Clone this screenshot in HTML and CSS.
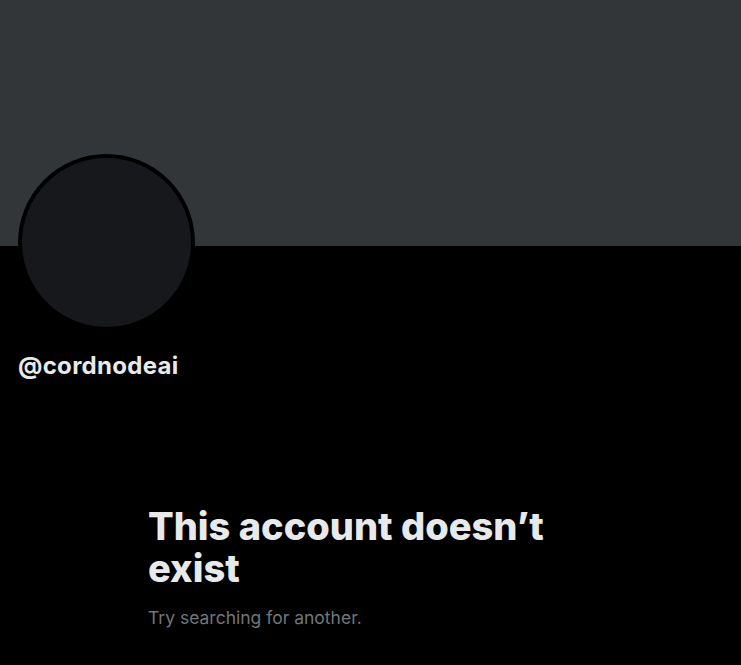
FILE: index.html
```html
<!DOCTYPE html>
<html>
<head>
<meta charset="utf-8">
<link rel="stylesheet" href="styles.css">
</head>
<body>
<div class="banner"></div>
<div class="profile">
  <div class="avatar"></div>
  <div class="handle">@cordnodeai</div>
</div>
<div class="empty">
  <h1 class="title">This account doesn’t exist</h1>
  <p class="sub">Try searching for another.</p>
</div>
</body>
</html>
```
FILE: styles.css
```css
html, body {
  margin: 0;
  padding: 0;
  background: #000;
}
body {
  font-family: Inter, "Open Sans", "Liberation Sans", sans-serif;
  color: #e7e9ea;
  width: 741px;
  height: 665px;
  overflow: hidden;
}
.banner {
  height: 246px;
  background: #333639;
}
.profile {
  padding: 0 18px;
}
.avatar {
  width: 169px;
  height: 169px;
  border: 4px solid #000;
  border-radius: 50%;
  background: #16181c;
  margin-top: -92px;
}
.handle {
  margin-top: 21px;
  font-size: 24px;
  font-weight: 700;
  line-height: 28px;
  letter-spacing: 0.3px;
}
.empty {
  margin: 125px 0 0 148px;
  width: 410px;
}
.title {
  margin: 0;
  font-size: 38px;
  line-height: 42px;
  font-weight: 800;
  letter-spacing: 0;
}
.sub {
  margin: 17px 0 0;
  font-size: 17.5px;
  line-height: 23px;
  color: #71767b;
}
```
